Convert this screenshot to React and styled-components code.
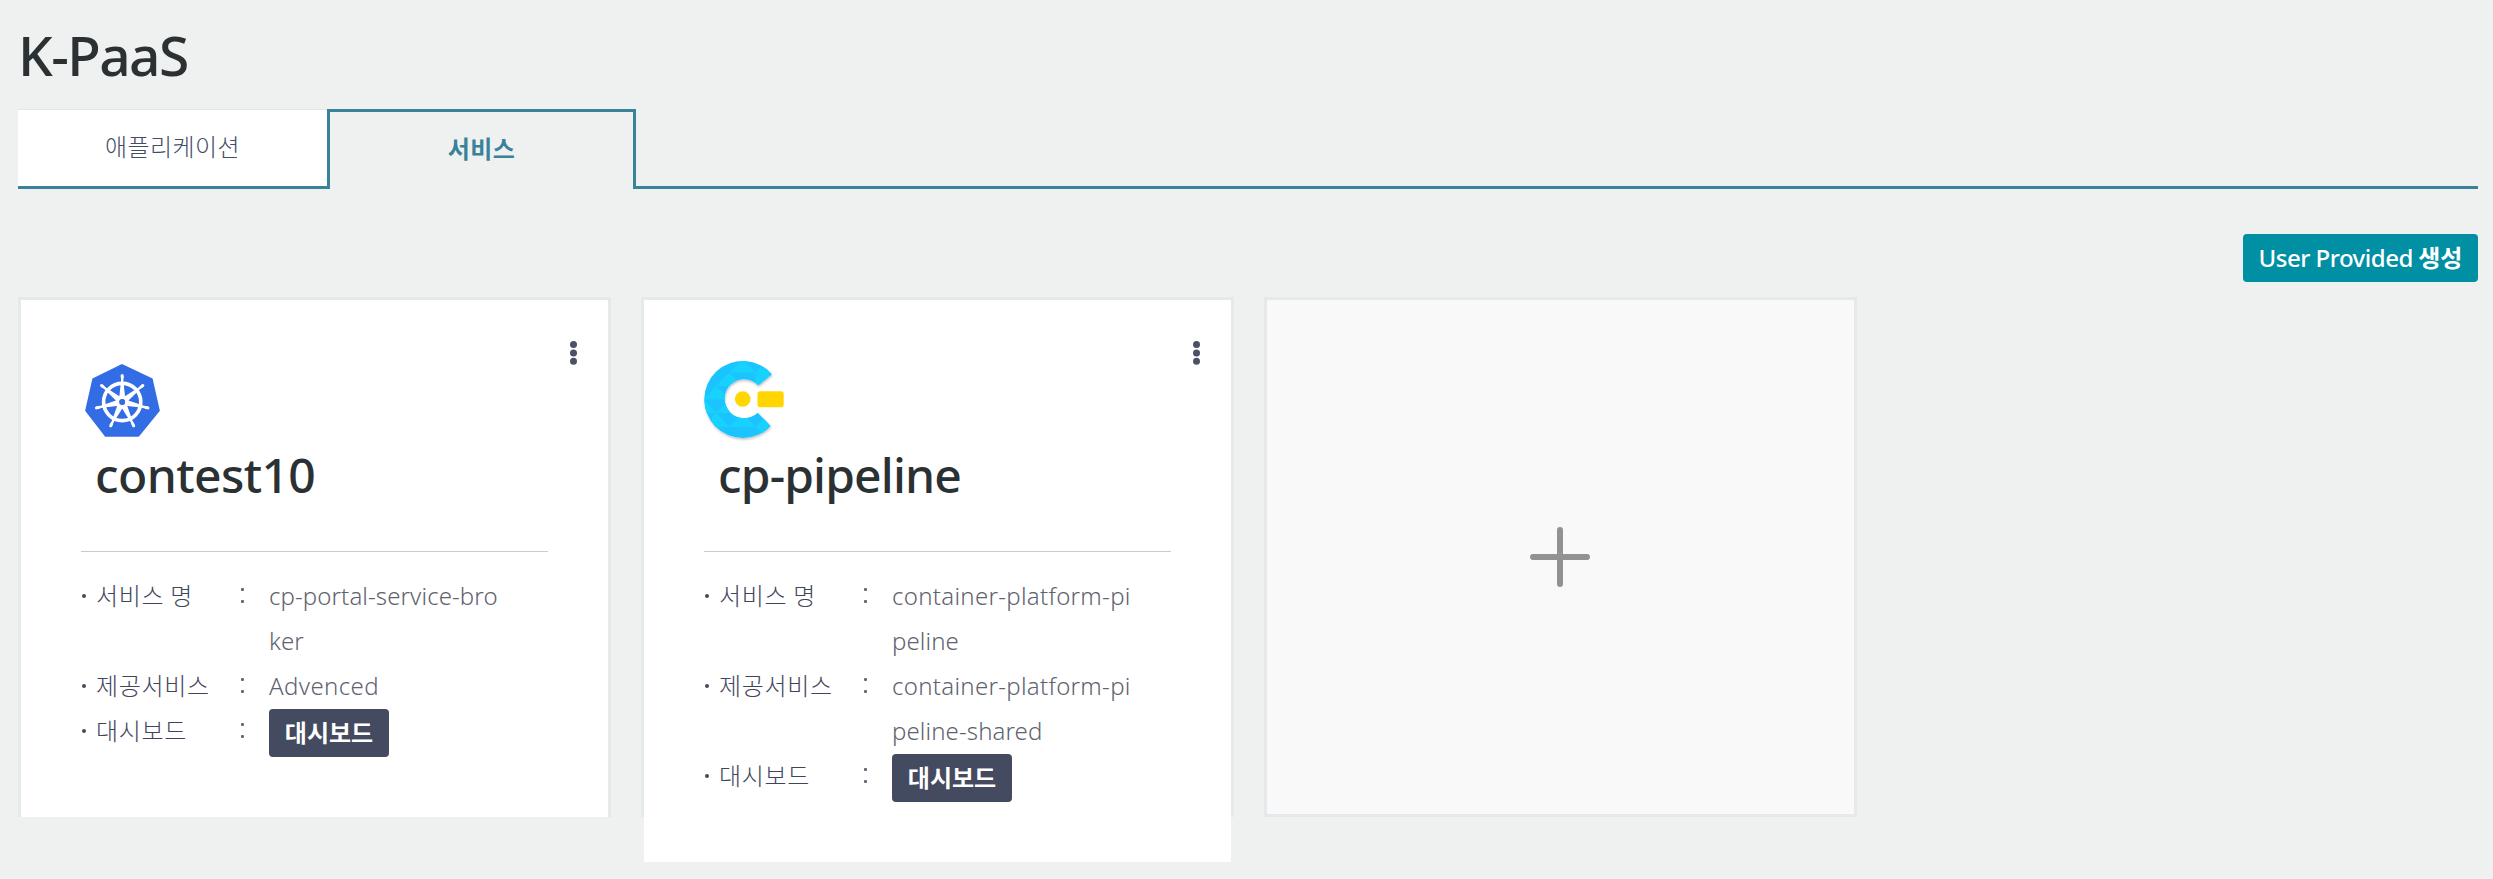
import React from 'react';
import styled, { createGlobalStyle } from 'styled-components';

const GlobalStyle = createGlobalStyle`
  * { box-sizing: border-box; }
  html, body, #root { height: 100%; }
  body {
    margin: 0;
    background: #eff1f1;
    font-family: "Noto Sans", "Noto Sans CJK KR", sans-serif;
    color: #2b3133;
  }
  h1, h2, ul, dl, dd, dt { margin: 0; padding: 0; }
`;

const Page = styled.main`
  height: 879px;
  padding: 18px 15px 0 18px;
  overflow: hidden;
`;

const PageTitle = styled.h1`
  height: 91px;
  font-size: 55px;
  line-height: 74px;
  font-weight: 500;
  letter-spacing: -1.6px;
`;

const TabBar = styled.nav`
  display: flex;
  height: 80px;
`;

const Tab = styled.button`
  width: 309px;
  padding: 0 0 5px;
  font: 300 24px/1 "Noto Sans CJK KR", sans-serif;
  letter-spacing: 0.4px;
  color: #454c66;
  background: #fff;
  border: 0;
  border-top: 1px solid #e3e6e7;
  border-bottom: 3px solid #38829a;
`;

const ActiveTab = styled(Tab)`
  padding: 0 0 6px;
  font-weight: 700;
  color: #38829a;
  background: transparent;
  border: 3px solid #38829a;
  border-bottom: 0;
`;

const TabRule = styled.div`
  flex: 1;
  border-bottom: 3px solid #38829a;
`;

const Actions = styled.div`
  display: flex;
  justify-content: flex-end;
  padding: 45px 0 15px;
`;

const Button = styled.button`
  display: block;
  width: ${(p) => p.$width}px;
  height: 48px;
  padding: 0 0 2px;
  border: 0;
  border-radius: 4px;
  color: #fff;
  background: ${(p) => p.$color};
  font: 700 24px/44px "Noto Sans CJK KR", sans-serif;
  white-space: nowrap;
`;

const Latin = styled.span`
  font-family: "Noto Sans", sans-serif;
  font-weight: 500;
  letter-spacing: -0.5px;
`;

const CardGrid = styled.section`
  display: grid;
  grid-template-columns: repeat(3, 593px);
  gap: 30px;
`;

const Card = styled.article`
  height: 520px;
  border: 3px solid #e5e9ec;
`;

const CardBody = styled.div`
  position: relative;
  padding: 57px 60px 60px;
  background: #fff;
`;

const MenuButton = styled.button`
  position: absolute;
  top: 41px;
  right: 31px;
  width: 7px;
  height: 24px;
  padding: 0;
  border: 0;
  background: none;

  svg { display: block; }
`;

const CardHeader = styled.header`
  height: 195px;
  border-bottom: 1px solid #c9cbcd;
`;

const LogoBox = styled.div`
  height: 84px;
  padding: ${(p) => p.$inset};

  svg { display: block; overflow: visible; }
`;

const CardTitle = styled.h2`
  padding-left: 14px;
  font-size: 48px;
  line-height: 68px;
  font-weight: 500;
  letter-spacing: ${(p) => p.$tracking}px;
`;

const Details = styled.dl`
  padding-top: 22px;
`;

const DetailRow = styled.div`
  display: grid;
  grid-template-columns: 15px 141px 32px 250px;
  font-size: 24px;
  line-height: 45px;
  font-weight: 300;
`;

const Bullet = styled.i`
  width: 4px;
  height: 4px;
  margin: 20px 0 0 1px;
  border-radius: 50%;
  background: #444a5c;
`;

const Label = styled.dt`
  height: 45px;
  font-family: "Noto Sans CJK KR", sans-serif;
  line-height: 42px;
  letter-spacing: 0.7px;
  color: #3f465c;
`;

const Colon = styled.span`
  display: flex;
  flex-direction: column;
  gap: 9px;
  padding: 14px 0 0 4px;

  &::before, &::after {
    content: '';
    width: 3px;
    height: 3px;
    border-radius: 1px;
    background: #646876;
  }
`;

const Value = styled.dd`
  color: #5f636e;
  white-space: nowrap;
`;

const ValueLine = styled.span`
  display: block;
  height: 45px;
  line-height: 43px;
  letter-spacing: ${(p) => p.$tracking || 0.1}px;
`;

const AddCard = styled(Card)`
  display: flex;
  align-items: center;
  justify-content: center;
  padding-right: 2px;
  background: #f9f9f9;
`;

const HEPTAGON = 'M37 1.5 L66.5 15.5 L73.5 46.5 L53.2 71.5 L20.8 71.5 L1.5 46.5 L8.5 15.5 Z';
const SPOKES = [0, 1, 2, 3, 4, 5, 6].map((n) => (n * 360) / 7);

function KubernetesLogo() {
  return (
    <svg width="75" height="73" viewBox="0 0 75 73">
      <path d={HEPTAGON} fill="#326de6" stroke="#326de6" strokeWidth="2.6" strokeLinejoin="round" />
      <circle cx="37.2" cy="38" r="18.6" fill="none" stroke="#fff" strokeWidth="3.6" />
      {SPOKES.map((angle) => (
        <g key={angle} transform={`rotate(${angle} 37.2 38)`}>
          <path d="M34.2 34 L35.8 19 H38.6 L40.2 34 Z" fill="#fff" />
          <path d="M37.2 20 V12.2" stroke="#fff" strokeWidth="2.4" strokeLinecap="round" />
          <path d="M37.2 13.4 V11.6" stroke="#fff" strokeWidth="3" strokeLinecap="round" />
        </g>
      ))}
      <circle cx="37.2" cy="38" r="4.6" fill="none" stroke="#fff" strokeWidth="3.4" />
      <circle cx="37.2" cy="38" r="2.8" fill="#326de6" />
    </svg>
  );
}

const C_SHAPE = 'M68 14.3 A38.5 38.5 0 1 0 66.7 66 L53.7 52.7 A19.5 19.5 0 1 1 54.3 25.3 Z';

function PipelineLogo() {
  return (
    <svg width="80" height="80" viewBox="0 0 80 80">
      <defs>
        <clipPath id="c-shape"><path d={C_SHAPE} /></clipPath>
        <filter id="c-shadow" x="-10%" y="-10%" width="125%" height="125%">
          <feDropShadow dx="0.6" dy="1.6" stdDeviation="1.3" floodOpacity="0.25" />
        </filter>
      </defs>
      <path d={C_SHAPE} fill="#1ac4ff" filter="url(#c-shadow)" />
      <g clipPath="url(#c-shape)" fill="#17d2ff">
        <path d="M25.5 12.5 L38.5 -1 L51.5 12.5 Z M12 26 L25.5 12.5 L38.5 26 Z M51.5 12.5 L65 -1 V26 L51.5 26 Z" />
        <path d="M0 39.5 L12 26 L25.5 39.5 Z M0 39.5 L12 53 L-2 53 Z M12 53 L25.5 67 L0 67 Z" />
        <path d="M12 53 L25.5 39.5 V53 Z M25.5 67 L38.5 53 L51.5 67 Z M51.5 67 L65 53 V80 Z" />
      </g>
      <circle cx="38.7" cy="39" r="7.8" fill="#ffd602" />
      <rect x="53.5" y="31.2" width="26.2" height="16" rx="2.8" fill="#ffd602" />
    </svg>
  );
}

function MoreIcon() {
  return (
    <svg width="7" height="24" viewBox="0 0 7 24" fill="#4b5265">
      <circle cx="3.5" cy="3.6" r="3.5" />
      <circle cx="3.5" cy="12" r="3.5" />
      <circle cx="3.5" cy="20.3" r="3.5" />
    </svg>
  );
}

function PlusIcon() {
  return (
    <svg width="60" height="60" viewBox="0 0 60 60" stroke="#929292" strokeWidth="6" strokeLinecap="round">
      <path d="M3 30 H57 M30 3 V57" />
    </svg>
  );
}

function Detail({ label, children }) {
  return (
    <DetailRow>
      <Bullet />
      <Label>{label}</Label>
      <Colon />
      <Value>{children}</Value>
    </DetailRow>
  );
}

function ServiceCard({ logo, inset, name, tracking, children }) {
  return (
    <Card>
      <CardBody>
        <MenuButton aria-label="메뉴"><MoreIcon /></MenuButton>
        <CardHeader>
          <LogoBox $inset={inset}>{logo}</LogoBox>
          <CardTitle $tracking={tracking}>{name}</CardTitle>
        </CardHeader>
        <Details>
          {children}
          <Detail label="대시보드">
            <Button $width={120} $color="#444a60">대시보드</Button>
          </Detail>
        </Details>
      </CardBody>
    </Card>
  );
}

export default function App() {
  return (
    <>
      <GlobalStyle />
      <Page>
        <PageTitle>K-PaaS</PageTitle>
        <TabBar>
          <Tab>애플리케이션</Tab>
          <ActiveTab>서비스</ActiveTab>
          <TabRule />
        </TabBar>
        <Actions>
          <Button $width={235} $color="#008fa3"><Latin>User Provided</Latin> 생성</Button>
        </Actions>
        <CardGrid>
          <ServiceCard logo={<KubernetesLogo />} inset="7px 0 0 4px" name="contest10" tracking={-0.6}>
            <Detail label="서비스 명">
              <ValueLine>cp-portal-service-bro</ValueLine>
              <ValueLine>ker</ValueLine>
            </Detail>
            <Detail label="제공서비스">
              <ValueLine $tracking={0.4}>Advenced</ValueLine>
            </Detail>
          </ServiceCard>
          <ServiceCard logo={<PipelineLogo />} inset="3px 0 0" name="cp-pipeline" tracking={-0.85}>
            <Detail label="서비스 명">
              <ValueLine $tracking={0.3}>container-platform-pi</ValueLine>
              <ValueLine>peline</ValueLine>
            </Detail>
            <Detail label="제공서비스">
              <ValueLine $tracking={0.3}>container-platform-pi</ValueLine>
              <ValueLine>peline-shared</ValueLine>
            </Detail>
          </ServiceCard>
          <AddCard><PlusIcon /></AddCard>
        </CardGrid>
      </Page>
    </>
  );
}
